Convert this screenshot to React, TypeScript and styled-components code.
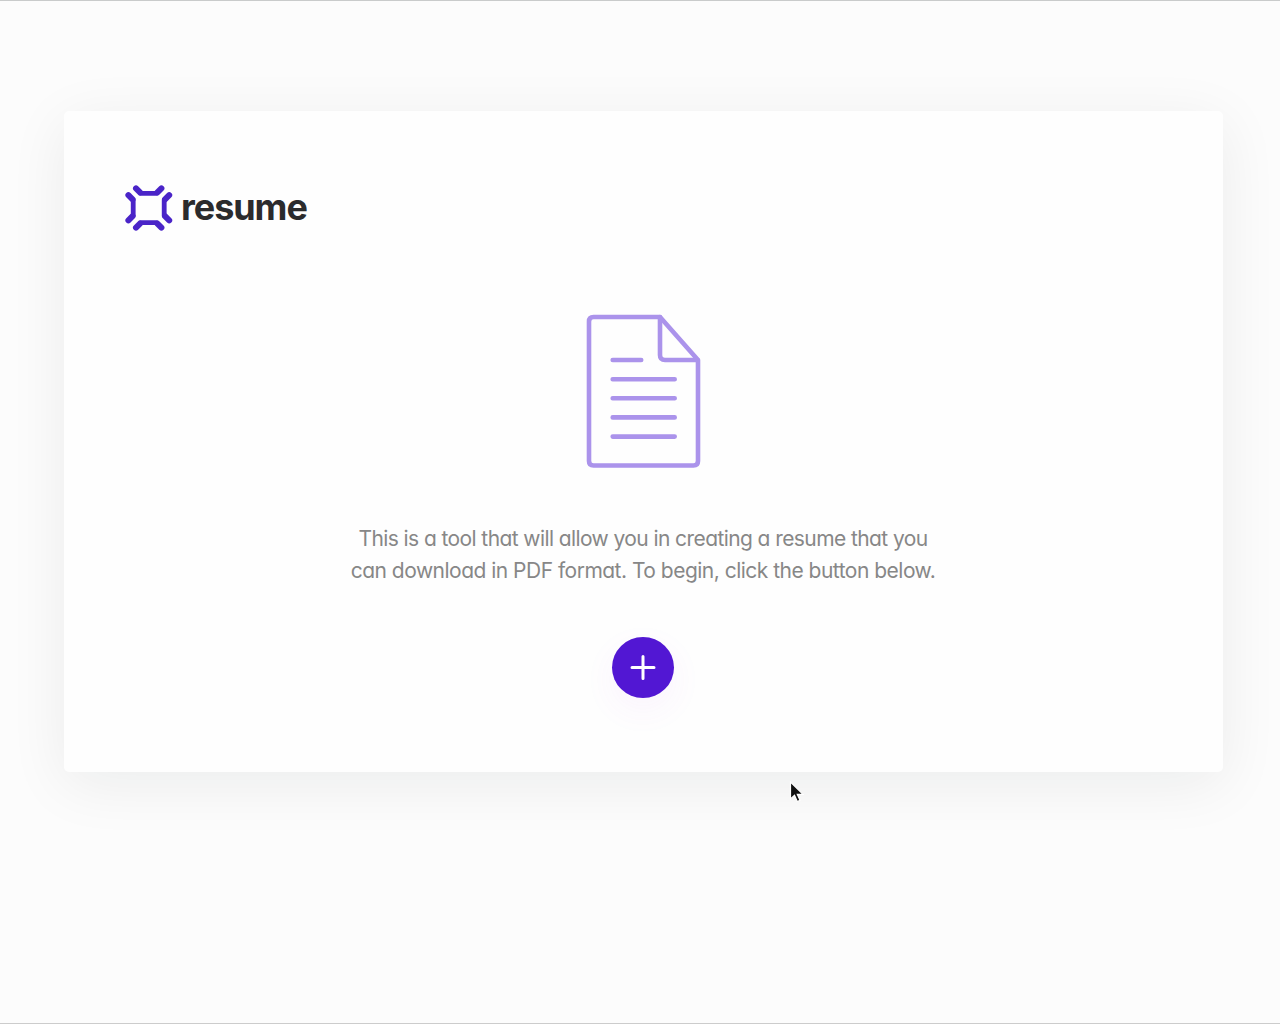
import React from 'react';
import styled, { createGlobalStyle } from 'styled-components';

const GlobalStyle = createGlobalStyle`
  *, *::before, *::after { box-sizing: border-box; }
  body {
    margin: 0;
    background: #fcfcfc;
    font-family: Inter, "Liberation Sans", sans-serif;
    font-feature-settings: "cv11" 1;
  }
`;

const Page = styled.main`
  position: relative;
  display: flex;
  justify-content: center;
  align-items: flex-start;
  width: 100%;
  height: 1024px;
  padding: 110px 57px 0 64px;
  border-top: 1px solid #c9cbcb;
  border-bottom: 1px solid #cccccc;
  overflow: hidden;
`;

const Card = styled.section`
  display: flex;
  flex-direction: column;
  align-items: center;
  width: 100%;
  height: 661px;
  padding: 73px 61px 0 60px;
  border-radius: 5px;
  background: #fefefe;
  box-shadow: 0 12px 60px rgba(20, 35, 25, 0.07);
`;

const Brand = styled.header`
  display: flex;
  align-items: flex-start;
  align-self: flex-start;
  height: 48px;
`;

const BrandMark = styled.svg`
  width: 50px;
  height: 48px;
  flex: none;
`;

const BrandName = styled.span`
  margin-left: 7px;
  color: #2b2b2d;
  font-size: 36px;
  font-weight: 700;
  line-height: 46px;
  letter-spacing: -1.05px;
`;

const DocumentIcon = styled.svg`
  width: 116px;
  height: 156px;
  margin-top: 81px;
`;

const Intro = styled.p`
  display: flex;
  flex-direction: column;
  align-items: center;
  margin: 54px 0 0;
  color: #878787;
  font-size: 21px;
  line-height: 32px;
`;

const IntroLine = styled.span<{ $tracking: number }>`
  letter-spacing: ${({ $tracking }) => $tracking}px;
  white-space: nowrap;
`;

const AddButton = styled.button`
  display: grid;
  place-items: center;
  width: 62px;
  height: 61px;
  margin-top: 50px;
  padding: 0;
  border: 0;
  border-radius: 50%;
  background: #5217d3;
  box-shadow: 0 12px 34px rgba(190, 70, 240, 0.06);
`;

const Pointer = styled.svg`
  position: absolute;
  left: 788px;
  top: 779px;
  width: 18px;
  height: 26px;
`;

export default function App() {
  return (
    <>
      <GlobalStyle />
      <Page>
        <Card>
          <Brand>
            <BrandMark viewBox="0 0 50 48" fill="none" stroke="#4a24c8" strokeLinejoin="round" strokeLinecap="round">
              <path strokeWidth="4.8" d="M16.500 9.400H32.500M16.500 38.600H32.500M9.200 16.200V31.400M40.200 16.200V31.400" />
              <path
                strokeWidth="6"
                d="M12 4.400 16 8.400M37.400 4.400 33.400 8.400M12 43.600 16 39.600M37.400 43.600 33.400 39.600M4.400 11.200 8.600 15.400M4.400 36.400 8.600 32.200M45.200 11.200 41 15.400M45.200 36.400 41 32.200"
              />
            </BrandMark>
            <BrandName>resume</BrandName>
          </Brand>
          <DocumentIcon viewBox="0 0 116 156" fill="none" stroke="#ab93eb" strokeWidth="4.6" strokeLinecap="round" strokeLinejoin="round">
            <path d="M75 4H8.500Q4 4 4 8.500V148Q4 152.500 8.500 152.500H108.500Q113 152.500 113 148V47Z" />
            <path d="M75 4V42Q75 47 80 47H112.500" />
            <path d="M27.700 47H56.200M27.700 66.200H89.700M27.700 85.300H89.700M27.700 104.400H89.700M27.700 123.600H89.700" />
          </DocumentIcon>
          <Intro>
            <IntroLine $tracking={-0.59}>This is a tool that will allow you in creating a resume that you</IntroLine>
            <IntroLine $tracking={-0.51}>can download in PDF format. To begin, click the button below.</IntroLine>
          </Intro>
          <AddButton aria-label="Create resume">
            <svg width="26" height="27" viewBox="0 0 26 27" stroke="#ffffff" strokeWidth="3" strokeLinecap="round">
              <path d="M13 2.500V24.500M2 13.500H24" />
            </svg>
          </AddButton>
        </Card>
        <Pointer viewBox="0 0 18 26">
          <path d="M2.500 2V19L6.500 15.300 9.300 21.500 12 20.300 9.300 14.300H15Z" fill="#111" stroke="#fff" strokeWidth="1.200" />
        </Pointer>
      </Page>
    </>
  );
}
